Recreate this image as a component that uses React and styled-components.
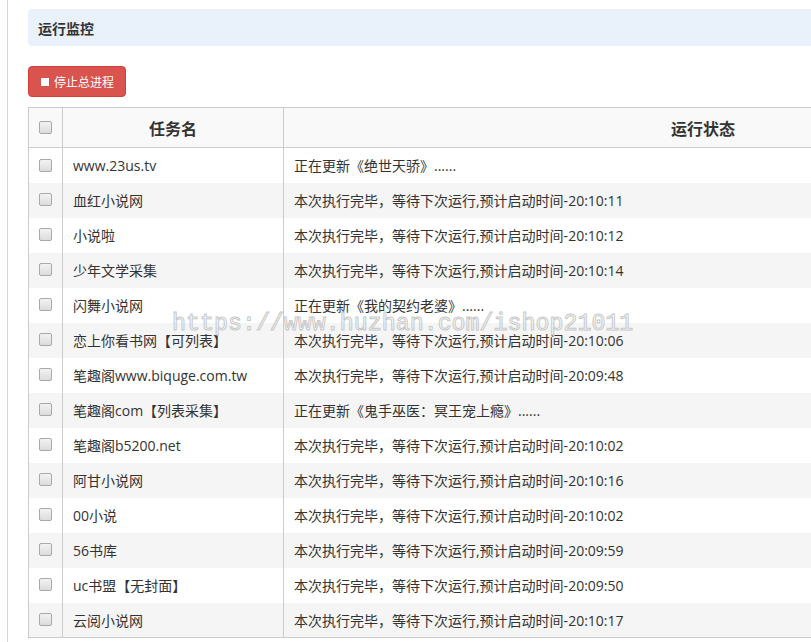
import React from 'react';
import styled, { createGlobalStyle } from 'styled-components';

const GlobalStyle = createGlobalStyle`
  html, body {
    margin: 0;
    padding: 0;
    background: #fff;
    overflow: hidden;
  }
  body {
    font-family: 'Open Sans', 'Noto Sans CJK SC', sans-serif;
    font-size: 14px;
    color: #333;
  }
`;

const Page = styled.div`
  position: relative;
  margin-left: 7px;
  min-height: 642px;
  border-left: 1px solid #d9d9d9;
  padding: 9px 0 0 20px;
  box-sizing: border-box;
  width: 1200px;
`;

const TitleBar = styled.div`
  background: #e9f2fb;
  border-radius: 4px;
  height: 37px;
  display: flex;
  align-items: center;
  padding-left: 10px;
  font-size: 14px;
  font-weight: 700;
  color: #333;
`;

const Toolbar = styled.div`
  display: flex;
  padding: 20px 0 10px;
`;

const StopButton = styled.button`
  display: inline-flex;
  align-items: center;
  gap: 5px;
  height: 31px;
  padding: 0 11px 0 12px;
  background: #d9534f;
  border: 1px solid #d43f3a;
  border-radius: 4px;
  color: #fff;
  font-family: inherit;
  font-size: 12px;
  cursor: pointer;
`;

const StopIcon = styled.span`
  width: 8px;
  height: 8px;
  background: #fff;
  display: inline-block;
`;

const Table = styled.table`
  border-collapse: collapse;
  width: 1095px;
  table-layout: fixed;
  border: 1px solid #ccc;
`;

const HeadCell = styled.th`
  height: 39px;
  background: #f9f9f9;
  border: 1px solid #ccc;
  font-size: 16px;
  font-weight: 700;
  color: #333;
  text-align: center;
  padding: 0;
`;

const Row = styled.tr`
  background: ${p => (p.$striped ? '#f5f5f5' : '#fff')};
`;

const Cell = styled.td`
  height: 35px;
  padding: 0 10px;
  border-left: 1px solid #ccc;
  border-right: 1px solid #ccc;
  white-space: nowrap;
  overflow: hidden;
  text-align: ${p => (p.$center ? 'center' : 'left')};
  box-sizing: border-box;
`;

const Check = styled.span`
  display: inline-block;
  width: 11px;
  height: 11px;
  border: 1px solid #a9a9a9;
  border-radius: 2px;
  background: linear-gradient(#f2f2f2, #dcdcdc);
  vertical-align: middle;
  margin-top: -4px;
`;

const Watermark = styled.div`
  position: absolute;
  left: 164px;
  top: 311px;
  font-family: 'Liberation Mono', monospace;
  font-size: 23.3px;
  color: rgba(255, 255, 255, 0.6);
  -webkit-text-stroke: 1px #c8c8c8;
  pointer-events: none;
  white-space: nowrap;
`;

const rows = [
  ['www.23us.tv', '正在更新《绝世天骄》......'],
  ['血红小说网', '本次执行完毕，等待下次运行,预计启动时间-20:10:11'],
  ['小说啦', '本次执行完毕，等待下次运行,预计启动时间-20:10:12'],
  ['少年文学采集', '本次执行完毕，等待下次运行,预计启动时间-20:10:14'],
  ['闪舞小说网', '正在更新《我的契约老婆》......'],
  ['恋上你看书网【可列表】', '本次执行完毕，等待下次运行,预计启动时间-20:10:06'],
  ['笔趣阁www.biquge.com.tw', '本次执行完毕，等待下次运行,预计启动时间-20:09:48'],
  ['笔趣阁com【列表采集】', '正在更新《鬼手巫医：冥王宠上瘾》......'],
  ['笔趣阁b5200.net', '本次执行完毕，等待下次运行,预计启动时间-20:10:02'],
  ['阿甘小说网', '本次执行完毕，等待下次运行,预计启动时间-20:10:16'],
  ['00小说', '本次执行完毕，等待下次运行,预计启动时间-20:10:02'],
  ['56书库', '本次执行完毕，等待下次运行,预计启动时间-20:09:59'],
  ['uc书盟【无封面】', '本次执行完毕，等待下次运行,预计启动时间-20:09:50'],
  ['云阅小说网', '本次执行完毕，等待下次运行,预计启动时间-20:10:17'],
];

export default function App() {
  return (
    <>
      <GlobalStyle />
      <Page>
        <TitleBar>运行监控</TitleBar>
        <Toolbar>
          <StopButton>
            <StopIcon />
            停止总进程
          </StopButton>
        </Toolbar>
        <Table>
          <colgroup>
            <col style={{ width: 34 }} />
            <col style={{ width: 221 }} />
            <col />
          </colgroup>
          <thead>
            <tr>
              <HeadCell><Check /></HeadCell>
              <HeadCell>任务名</HeadCell>
              <HeadCell>运行状态</HeadCell>
            </tr>
          </thead>
          <tbody>
            {rows.map(([name, status], i) => (
              <Row key={name} $striped={i % 2 === 1}>
                <Cell $center><Check /></Cell>
                <Cell>{name}</Cell>
                <Cell>{status}</Cell>
              </Row>
            ))}
          </tbody>
        </Table>
        <Watermark>https://www.huzhan.com/ishop21011</Watermark>
      </Page>
    </>
  );
}
